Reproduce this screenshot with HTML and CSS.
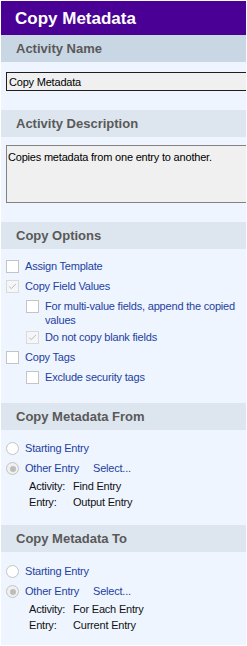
FILE: index.html
```html
<!DOCTYPE html>
<html lang="en">
<head>
    <meta charset="UTF-8">
    <title>Copy Metadata</title>
    <link rel="stylesheet" href="styles.css">
</head>
<body>
    <div class="panel">
        <h1 class="title">Copy Metadata</h1>

        <!-- Activity Name -->
        <h2 class="group-head group-head-first">Activity Name</h2>
        <div class="group-body body-name">
            <input type="text" class="field" value="Copy Metadata">
        </div>

        <!-- Activity Description -->
        <h2 class="group-head">Activity Description</h2>
        <div class="group-body body-desc">
            <textarea class="field field-area">Copies metadata from one entry to another.</textarea>
        </div>

        <!-- Copy Options -->
        <h2 class="group-head">Copy Options</h2>
        <div class="group-body body-options">
            <div class="opt"><span class="box"></span><span>Assign Template</span></div>
            <div class="opt"><span class="box box-checked"><svg viewBox="0 0 13 13"><path d="M2.5 6.5 L5 9 L10.5 3.5"/></svg></span><span>Copy Field Values</span></div>
            <div class="opt sub opt-wrap"><span class="box"></span><span>For multi-value fields, append the copied<br>values</span></div>
            <div class="opt sub"><span class="box box-checked"><svg viewBox="0 0 13 13"><path d="M2.5 6.5 L5 9 L10.5 3.5"/></svg></span><span>Do not copy blank fields</span></div>
            <div class="opt"><span class="box"></span><span>Copy Tags</span></div>
            <div class="opt sub"><span class="box"></span><span>Exclude security tags</span></div>
        </div>

        <!-- Copy Metadata From -->
        <h2 class="group-head">Copy Metadata From</h2>
        <div class="group-body body-from">
            <div class="opt"><span class="radio"></span><span>Starting Entry</span></div>
            <div class="opt"><span class="radio radio-on"></span><span class="opt-label">Other Entry</span><span>Select...</span></div>
            <div class="detail"><span>Activity:</span><span>Find Entry</span></div>
            <div class="detail"><span>Entry:</span><span>Output Entry</span></div>
        </div>

        <!-- Copy Metadata To -->
        <h2 class="group-head">Copy Metadata To</h2>
        <div class="group-body body-to">
            <div class="opt"><span class="radio"></span><span>Starting Entry</span></div>
            <div class="opt"><span class="radio radio-on"></span><span class="opt-label">Other Entry</span><span>Select...</span></div>
            <div class="detail"><span>Activity:</span><span>For Each Entry</span></div>
            <div class="detail"><span>Entry:</span><span>Current Entry</span></div>
        </div>
    </div>
</body>
</html>
```
FILE: styles.css
```css
* {
    margin: 0;
    padding: 0;
    box-sizing: border-box;
}

body {
    background: #fff;
    font-family: 'Liberation Sans', Arial, sans-serif;
    font-size: 11px;
}

.panel {
    margin: 1px;
    height: 644px;
    background: #eef5ff;
    overflow: hidden;
}

.title {
    height: 34px;
    padding: 2px 0 0 14px;
    background: #4a0094;
    color: #fff;
    font-size: 17px;
    font-weight: bold;
    line-height: 32px;
}

.group-head {
    height: 27px;
    padding-left: 15px;
    background: #dde5ee;
    color: #595959;
    font-size: 13px;
    font-weight: bold;
    line-height: 27px;
}

.group-head-first {
    background: #c9d7e4;
}

.group-body {
    padding-left: 5px;
}

.body-name {
    padding-top: 10px;
    padding-bottom: 19px;
}

.body-desc {
    padding-top: 8px;
    padding-bottom: 19px;
}

.body-options {
    padding-top: 7px;
    padding-bottom: 16px;
}

.body-from {
    padding-top: 8px;
    padding-bottom: 15px;
}

.body-to {
    padding-top: 9px;
}

.field {
    display: block;
    width: 270px;
    height: 19px;
    padding: 0 2px;
    border: 1px solid #1e1e1e;
    background: #f0f0f0;
    color: #000;
    font-family: inherit;
    font-size: 11px;
    letter-spacing: -0.2px;
    outline: none;
}

.field-area {
    height: 58px;
    padding: 4px 1px;
    border-color: #828282;
    resize: none;
    line-height: 14px;
}

.opt {
    display: flex;
    align-items: flex-start;
    gap: 6px;
    min-height: 20px;
    padding-top: 3px;
    color: #1e3fa0;
    line-height: 14px;
    letter-spacing: -0.2px;
}

.opt.sub {
    padding-left: 20px;
}

.opt-wrap {
    white-space: nowrap;
}

.opt-label {
    width: 62px;
}

.box {
    flex: none;
    width: 13px;
    height: 13px;
    margin-top: 1px;
    border: 1px solid #c4c4c4;
    background: #fff;
}

.box-checked {
    border-color: #dadada;
    background: #f4f6f8;
}

.box svg {
    display: block;
    width: 11px;
    height: 11px;
    fill: none;
    stroke: #b4b4b4;
    stroke-width: 1.1;
}

.radio {
    flex: none;
    position: relative;
    width: 13px;
    height: 13px;
    margin-top: 1px;
    border: 1px solid #c4c4c4;
    border-radius: 50%;
    background: #fff;
}

.radio-on {
    background: #f0f0f0;
}

.radio-on::after {
    content: '';
    position: absolute;
    top: 2.5px;
    left: 2.5px;
    width: 6px;
    height: 6px;
    border-radius: 50%;
    background: #bdbdbd;
}

.detail {
    display: grid;
    grid-template-columns: 44px auto;
    height: 16px;
    padding-left: 23px;
    color: #111;
    line-height: 16px;
    letter-spacing: -0.2px;
}
```
